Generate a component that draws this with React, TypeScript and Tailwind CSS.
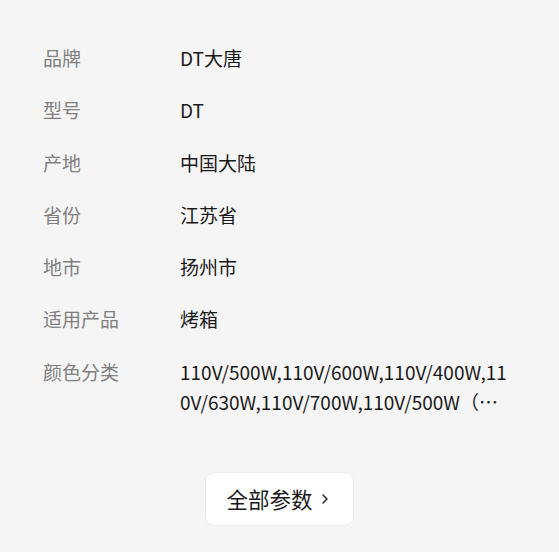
import { ChevronRight } from 'lucide-react'

const rows = [
  { label: '品牌', value: 'DT大唐' },
  { label: '型号', value: 'DT' },
  { label: '产地', value: '中国大陆' },
  { label: '省份', value: '江苏省' },
  { label: '地市', value: '扬州市' },
  { label: '适用产品', value: '烤箱' },
  {
    label: '颜色分类',
    value: '110V/500W,110V/600W,110V/400W,110V/630W,110V/700W,110V/500W（配件）,110V/600W（配件）',
  },
]

export default function App() {
  return (
    <div
      className="h-[552px] w-[559px] bg-[#f5f5f5] pt-[43px] pl-[43px] pr-[46px]"
      style={{ fontFamily: '"Noto Sans CJK SC", "Noto Sans", sans-serif' }}
    >
      {/* params list */}
      <div className="flex flex-col gap-[22.3px]">
        {rows.map(row => (
          <div key={row.label} className="flex text-[19px] leading-[30px]">
            <div className="w-[137px] shrink-0 text-[#808080]">{row.label}</div>
            <div className="flex-1 text-[#1a1a1a] break-all line-clamp-2">{row.value}</div>
          </div>
        ))}
      </div>

      <div className="flex justify-center pt-[55px] pl-[3px]">
        <button className="flex h-[54px] items-center gap-1 rounded-[10px] border border-[#ececec] bg-white pl-[20px] pr-[20px] text-[21.5px] text-[#1a1a1a]">
          全部参数
          <ChevronRight className="h-4 w-4" strokeWidth={2} />
        </button>
      </div>
    </div>
  )
}
